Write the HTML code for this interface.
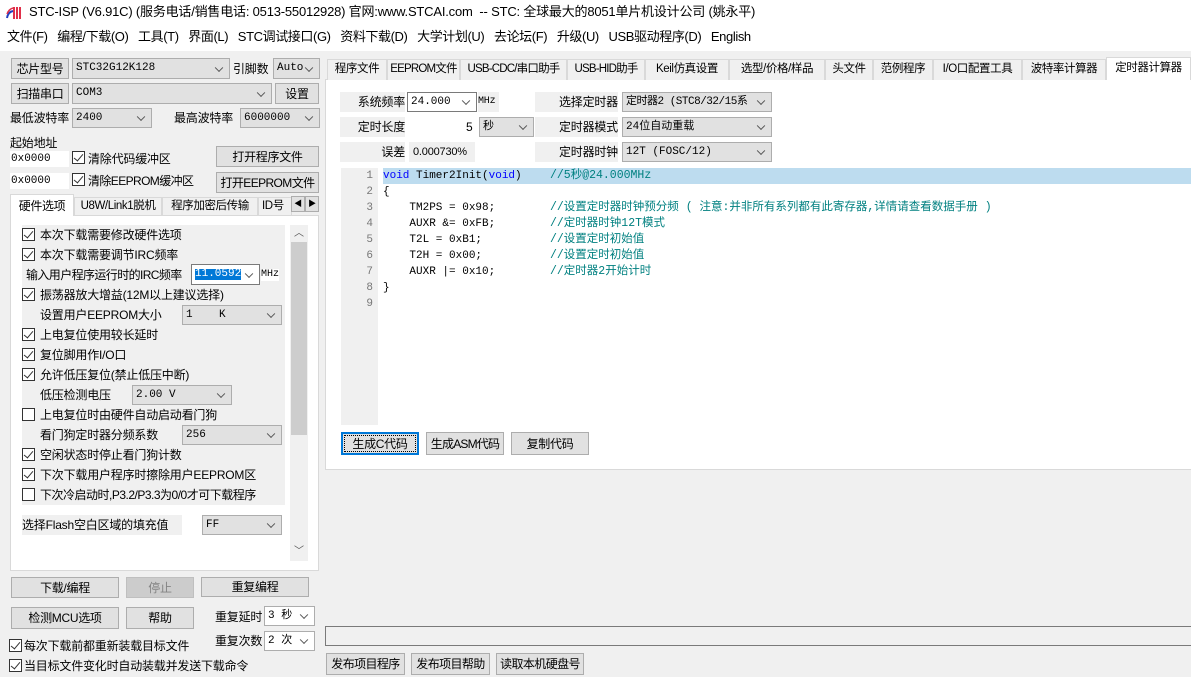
<!DOCTYPE html>
<html><head><meta charset="utf-8"><style>
*{box-sizing:border-box;margin:0;padding:0}
body{width:1191px;height:677px;background:#f0f0f0;position:relative;overflow:hidden;font-family:"Liberation Sans","Noto Sans CJK SC",sans-serif;font-size:12px;color:#000;line-height:1.15}
.a{position:absolute;white-space:nowrap}
.btn{position:absolute;background:#e1e1e1;border:1px solid #adadad;text-align:center;font-size:12px;display:flex;align-items:center;justify-content:center;white-space:nowrap;line-height:1;letter-spacing:-0.3px}
.cb{position:absolute;background:#e1e1e1;border:1px solid #adadad;font-family:"Liberation Mono","Noto Sans CJK SC",monospace;font-size:11px;padding-left:3px;display:flex;align-items:center;white-space:nowrap;overflow:hidden;line-height:1}
.cb.w{background:#fff;border-color:#7a7a7a}
.cb:after{content:"";position:absolute;right:7px;top:50%;width:5px;height:5px;border-right:1px solid #555;border-bottom:1px solid #555;transform:translateY(-70%) rotate(45deg)}
.inp{position:absolute;background:#fff;font-family:"Liberation Mono",monospace;font-size:11px;padding-left:1px;display:flex;align-items:center;line-height:1}
.chk{position:absolute;width:13px;height:13px;border:1px solid #333;background:#fff}
.chk.on:after{content:"";position:absolute;left:3px;top:0px;width:4px;height:8px;border-right:1.5px solid #333;border-bottom:1.5px solid #333;transform:rotate(40deg)}
.lbl{position:absolute;background:#f0f0f0;font-size:12px;display:flex;align-items:center;white-space:nowrap;line-height:1;letter-spacing:-0.2px}
.tab{position:absolute;top:59px;height:21px;background:#f0f0f0;border:1px solid #d9d9d9;border-bottom:none;font-size:11.5px;display:flex;align-items:center;justify-content:center;white-space:nowrap;line-height:1;letter-spacing:-0.4px;overflow:hidden}
.code{position:absolute;font-family:"Liberation Mono","Noto Sans CJK SC",monospace;font-size:11px;white-space:pre;line-height:16px}
.ln{position:absolute;left:341px;width:32px;text-align:right;font-family:"Liberation Mono",monospace;font-size:11px;color:#777;line-height:16px}
.t{font-size:12px;letter-spacing:-0.2px;line-height:1}
</style></head><body>
<div class="a" style="left:0;top:0;width:1191px;height:51px;background:#fff"></div>
<svg class="a" style="left:6px;top:4px" width="16" height="16"><rect x="7" y="3" width="2" height="12" fill="#e0304a"/><rect x="10" y="3" width="2" height="12" fill="#e0304a"/><rect x="13" y="3" width="2" height="12" fill="#e0304a"/><path d="M1 14 Q2 8 7 7" stroke="#2040c0" stroke-width="2" fill="none"/><path d="M1 10 Q3 5 7 4" stroke="#e0304a" stroke-width="1.5" fill="none"/></svg>
<div class="a" style="left:29px;top:5px;font-size:13px;letter-spacing:-0.2px">STC-ISP (V6.91C) (服务电话/销售电话: 0513-55012928) 官网:www.STCAI.com &nbsp;-- STC: 全球最大的8051单片机设计公司 (姚永平)</div>
<div class="a" style="left:7px;top:30px;font-size:13px;letter-spacing:-0.4px">文件(F) &nbsp; 编程/下载(O) &nbsp; 工具(T) &nbsp; 界面(L) &nbsp; STC调试接口(G) &nbsp; 资料下载(D) &nbsp; 大学计划(U) &nbsp; 去论坛(F) &nbsp; 升级(U) &nbsp; USB驱动程序(D) &nbsp; English</div>

<div class="btn" style="left:11px;top:58px;width:58px;height:21px">芯片型号</div>
<div class="cb" style="left:72px;top:58px;width:158px;height:21px">STC32G12K128</div>
<div class="a t" style="left:233px;top:63px">引脚数</div>
<div class="cb" style="left:273px;top:58px;width:47px;height:21px">Auto</div>
<div class="btn" style="left:11px;top:83px;width:58px;height:21px">扫描串口</div>
<div class="cb" style="left:72px;top:83px;width:200px;height:21px">COM3</div>
<div class="btn" style="left:275px;top:83px;width:44px;height:21px">设置</div>
<div class="a t" style="left:10px;top:112px">最低波特率</div>
<div class="cb" style="left:72px;top:108px;width:80px;height:20px">2400</div>
<div class="a t" style="left:174px;top:112px">最高波特率</div>
<div class="cb" style="left:240px;top:108px;width:80px;height:20px">6000000</div>
<div class="a t" style="left:10px;top:137px">起始地址</div>
<div class="inp" style="left:10px;top:151px;width:59px;height:16px">0x0000</div>
<div class="chk on" style="left:72px;top:151px"></div>
<div class="a t" style="left:88px;top:153px">清除代码缓冲区</div>
<div class="btn" style="left:216px;top:146px;width:103px;height:21px">打开程序文件</div>
<div class="inp" style="left:10px;top:173px;width:59px;height:16px">0x0000</div>
<div class="chk on" style="left:72px;top:173px"></div>
<div class="a t" style="left:88px;top:175px;letter-spacing:-0.6px">清除EEPROM缓冲区</div>
<div class="btn" style="left:216px;top:172px;width:103px;height:21px;letter-spacing:-0.6px">打开EEPROM文件</div>

<div class="a" style="left:10px;top:215px;width:309px;height:356px;background:#fff;border:1px solid #d9d9d9"></div>
<div class="tab" style="left:10px;top:194px;width:64px;height:22px;background:#fff;font-size:12px">硬件选项</div>
<div class="tab" style="left:74px;top:197px;width:88px;height:18px">U8W/Link1脱机</div>
<div class="tab" style="left:162px;top:197px;width:96px;height:18px">程序加密后传输</div>
<div class="tab" style="left:258px;top:197px;width:34px;height:18px;justify-content:flex-start;padding-left:3px">ID号</div>
<div class="btn" style="left:291px;top:196px;width:14px;height:16px;font-size:8px">◀</div>
<div class="btn" style="left:305px;top:196px;width:14px;height:16px;font-size:8px">▶</div>
<div class="a" style="left:290px;top:225px;width:18px;height:336px;background:#f0f0f0"></div>
<div class="a" style="left:291px;top:242px;width:16px;height:193px;background:#cdcdcd"></div>
<div class="a" style="left:294px;top:228px;font-size:10px;color:#555">︿</div>
<div class="a" style="left:294px;top:546px;font-size:10px;color:#555">﹀</div>

<div class="lbl" style="left:22px;top:225px;width:263px;height:20px;padding-left:18px">本次下载需要修改硬件选项</div>
<div class="lbl" style="left:22px;top:245px;width:263px;height:20px;padding-left:18px">本次下载需要调节IRC频率</div>
<div class="lbl" style="left:22px;top:265px;width:263px;height:20px;padding-left:4px;letter-spacing:-0.6px">输入用户程序运行时的IRC频率</div>
<div class="cb w" style="left:191px;top:264px;width:69px;height:21px"><span style="background:#0078d7;color:#fff">11.0592</span></div>
<div class="a" style="left:261px;top:269px;font-family:'Liberation Mono';font-size:10px;background:#fff">MHz</div>
<div class="lbl" style="left:22px;top:285px;width:263px;height:20px;padding-left:18px">振荡器放大增益(12M以上建议选择)</div>
<div class="lbl" style="left:22px;top:305px;width:263px;height:20px;padding-left:18px">设置用户EEPROM大小</div>
<div class="cb" style="left:182px;top:305px;width:100px;height:20px">1 &nbsp;&nbsp; K</div>
<div class="lbl" style="left:22px;top:325px;width:263px;height:20px;padding-left:18px">上电复位使用较长延时</div>
<div class="lbl" style="left:22px;top:345px;width:263px;height:20px;padding-left:18px">复位脚用作I/O口</div>
<div class="lbl" style="left:22px;top:365px;width:263px;height:20px;padding-left:18px">允许低压复位(禁止低压中断)</div>
<div class="lbl" style="left:22px;top:385px;width:263px;height:20px;padding-left:18px">低压检测电压</div>
<div class="cb" style="left:132px;top:385px;width:100px;height:20px">2.00 V</div>
<div class="lbl" style="left:22px;top:405px;width:263px;height:20px;padding-left:18px">上电复位时由硬件自动启动看门狗</div>
<div class="lbl" style="left:22px;top:425px;width:263px;height:20px;padding-left:18px">看门狗定时器分频系数</div>
<div class="cb" style="left:182px;top:425px;width:100px;height:20px">256</div>
<div class="lbl" style="left:22px;top:445px;width:263px;height:20px;padding-left:18px">空闲状态时停止看门狗计数</div>
<div class="lbl" style="left:22px;top:465px;width:263px;height:20px;padding-left:18px">下次下载用户程序时擦除用户EEPROM区</div>
<div class="lbl" style="left:22px;top:485px;width:263px;height:20px;padding-left:18px;letter-spacing:-0.5px">下次冷启动时,P3.2/P3.3为0/0才可下载程序</div>
<div class="lbl" style="left:22px;top:515px;width:160px;height:20px">选择Flash空白区域的填充值</div>
<div class="cb" style="left:202px;top:515px;width:80px;height:20px">FF</div>
<div class="chk on" style="left:22px;top:228px"></div>
<div class="chk on" style="left:22px;top:248px"></div>
<div class="chk on" style="left:22px;top:288px"></div>
<div class="chk on" style="left:22px;top:328px"></div>
<div class="chk on" style="left:22px;top:348px"></div>
<div class="chk on" style="left:22px;top:368px"></div>
<div class="chk" style="left:22px;top:408px"></div>
<div class="chk on" style="left:22px;top:448px"></div>
<div class="chk on" style="left:22px;top:468px"></div>
<div class="chk" style="left:22px;top:488px"></div>

<div class="btn" style="left:11px;top:577px;width:108px;height:21px">下载/编程</div>
<div class="btn" style="left:126px;top:577px;width:68px;height:21px;background:#cccccc;border-color:#bfbfbf;color:#838383">停止</div>
<div class="btn" style="left:201px;top:577px;width:108px;height:20px">重复编程</div>
<div class="btn" style="left:11px;top:607px;width:108px;height:22px">检测MCU选项</div>
<div class="btn" style="left:126px;top:607px;width:68px;height:22px">帮助</div>
<div class="a t" style="left:215px;top:611px">重复延时</div>
<div class="cb w" style="left:264px;top:606px;width:51px;height:20px;border-color:#adadad">3 秒</div>
<div class="a t" style="left:215px;top:635px">重复次数</div>
<div class="cb w" style="left:264px;top:631px;width:51px;height:20px;border-color:#adadad">2 次</div>
<div class="chk on" style="left:9px;top:639px"></div>
<div class="a t" style="left:24px;top:640px">每次下载前都重新装载目标文件</div>
<div class="chk on" style="left:9px;top:659px"></div>
<div class="a t" style="left:24px;top:660px">当目标文件变化时自动装载并发送下载命令</div>

<div class="a" style="left:325px;top:79px;width:870px;height:391px;background:#fff;border:1px solid #d9d9d9"></div>
<div class="tab" style="left:327px;width:60px">程序文件</div>
<div class="tab" style="left:387px;width:73px;letter-spacing:-0.8px">EEPROM文件</div>
<div class="tab" style="left:460px;width:107px;letter-spacing:-0.8px">USB-CDC/串口助手</div>
<div class="tab" style="left:567px;width:78px;letter-spacing:-0.8px">USB-HID助手</div>
<div class="tab" style="left:645px;width:84px">Keil仿真设置</div>
<div class="tab" style="left:729px;width:96px">选型/价格/样品</div>
<div class="tab" style="left:825px;width:48px">头文件</div>
<div class="tab" style="left:873px;width:60px">范例程序</div>
<div class="tab" style="left:933px;width:89px">I/O口配置工具</div>
<div class="tab" style="left:1022px;width:84px">波特率计算器</div>
<div class="tab" style="left:1106px;top:57px;height:23px;width:85px;background:#fff">定时器计算器</div>

<div class="lbl" style="left:340px;top:92px;width:65px;height:20px;justify-content:flex-end">系统频率</div>
<div class="cb w" style="left:407px;top:92px;width:70px;height:20px">24.000</div>
<div class="lbl" style="left:478px;top:92px;width:21px;height:20px;font-family:'Liberation Mono';font-size:10px">MHz</div>
<div class="lbl" style="left:535px;top:92px;width:83px;height:20px;justify-content:flex-end">选择定时器</div>
<div class="cb" style="left:622px;top:92px;width:150px;height:20px;letter-spacing:-0.5px">定时器2 (STC8/32/15系</div>
<div class="lbl" style="left:340px;top:117px;width:65px;height:20px;justify-content:flex-end">定时长度</div>
<div class="a t" style="left:466px;top:121px">5</div>
<div class="cb" style="left:479px;top:117px;width:55px;height:20px">秒</div>
<div class="lbl" style="left:535px;top:117px;width:83px;height:20px;justify-content:flex-end">定时器模式</div>
<div class="cb" style="left:622px;top:117px;width:150px;height:20px">24位自动重载</div>
<div class="lbl" style="left:340px;top:142px;width:65px;height:20px;justify-content:flex-end">误差</div>
<div class="lbl" style="left:409px;top:142px;width:66px;height:20px;padding-left:4px;font-size:11px">0.000730%</div>
<div class="lbl" style="left:535px;top:142px;width:83px;height:20px;justify-content:flex-end">定时器时钟</div>
<div class="cb" style="left:622px;top:142px;width:150px;height:20px">12T (FOSC/12)</div>

<div class="a" style="left:341px;top:168px;width:37px;height:257px;background:#f0f0f0"></div>
<div class="a" style="left:383px;top:168px;width:808px;height:16px;background:#bddcef"></div>
<div class="ln" style="top:168px">1<br>2<br>3<br>4<br>5<br>6<br>7<br>8<br>9</div>
<div class="code" style="left:383px;top:168px"><span style="color:#00f">void</span> Timer2Init(<span style="color:#00f">void</span>)
{
    TM2PS = 0x98;
    AUXR &amp;= 0xFB;
    T2L = 0xB1;
    T2H = 0x00;
    AUXR |= 0x10;
}</div>
<div class="code" style="left:550px;top:168px;color:#008080;font-size:11.5px">//5秒@24.000MHz

//设置定时器时钟预分频 ( 注意:并非所有系列都有此寄存器,详情请查看数据手册 )
//定时器时钟12T模式
//设置定时初始值
//设置定时初始值
//定时器2开始计时</div>

<div class="btn" style="left:341px;top:432px;width:78px;height:23px;border:2px solid #0078d7;outline:1px dotted #000;outline-offset:-4px">生成C代码</div>
<div class="btn" style="left:426px;top:432px;width:78px;height:23px;letter-spacing:-0.8px">生成ASM代码</div>
<div class="btn" style="left:511px;top:432px;width:78px;height:23px">复制代码</div>

<div class="a" style="left:325px;top:626px;width:870px;height:20px;border:1px solid #7a7a7a;background:#f0f0f0"></div>
<div class="btn" style="left:326px;top:653px;width:79px;height:22px;letter-spacing:-0.6px">发布项目程序</div>
<div class="btn" style="left:411px;top:653px;width:79px;height:22px;letter-spacing:-0.6px">发布项目帮助</div>
<div class="btn" style="left:496px;top:653px;width:88px;height:22px;letter-spacing:-0.6px">读取本机硬盘号</div>
</body></html>
